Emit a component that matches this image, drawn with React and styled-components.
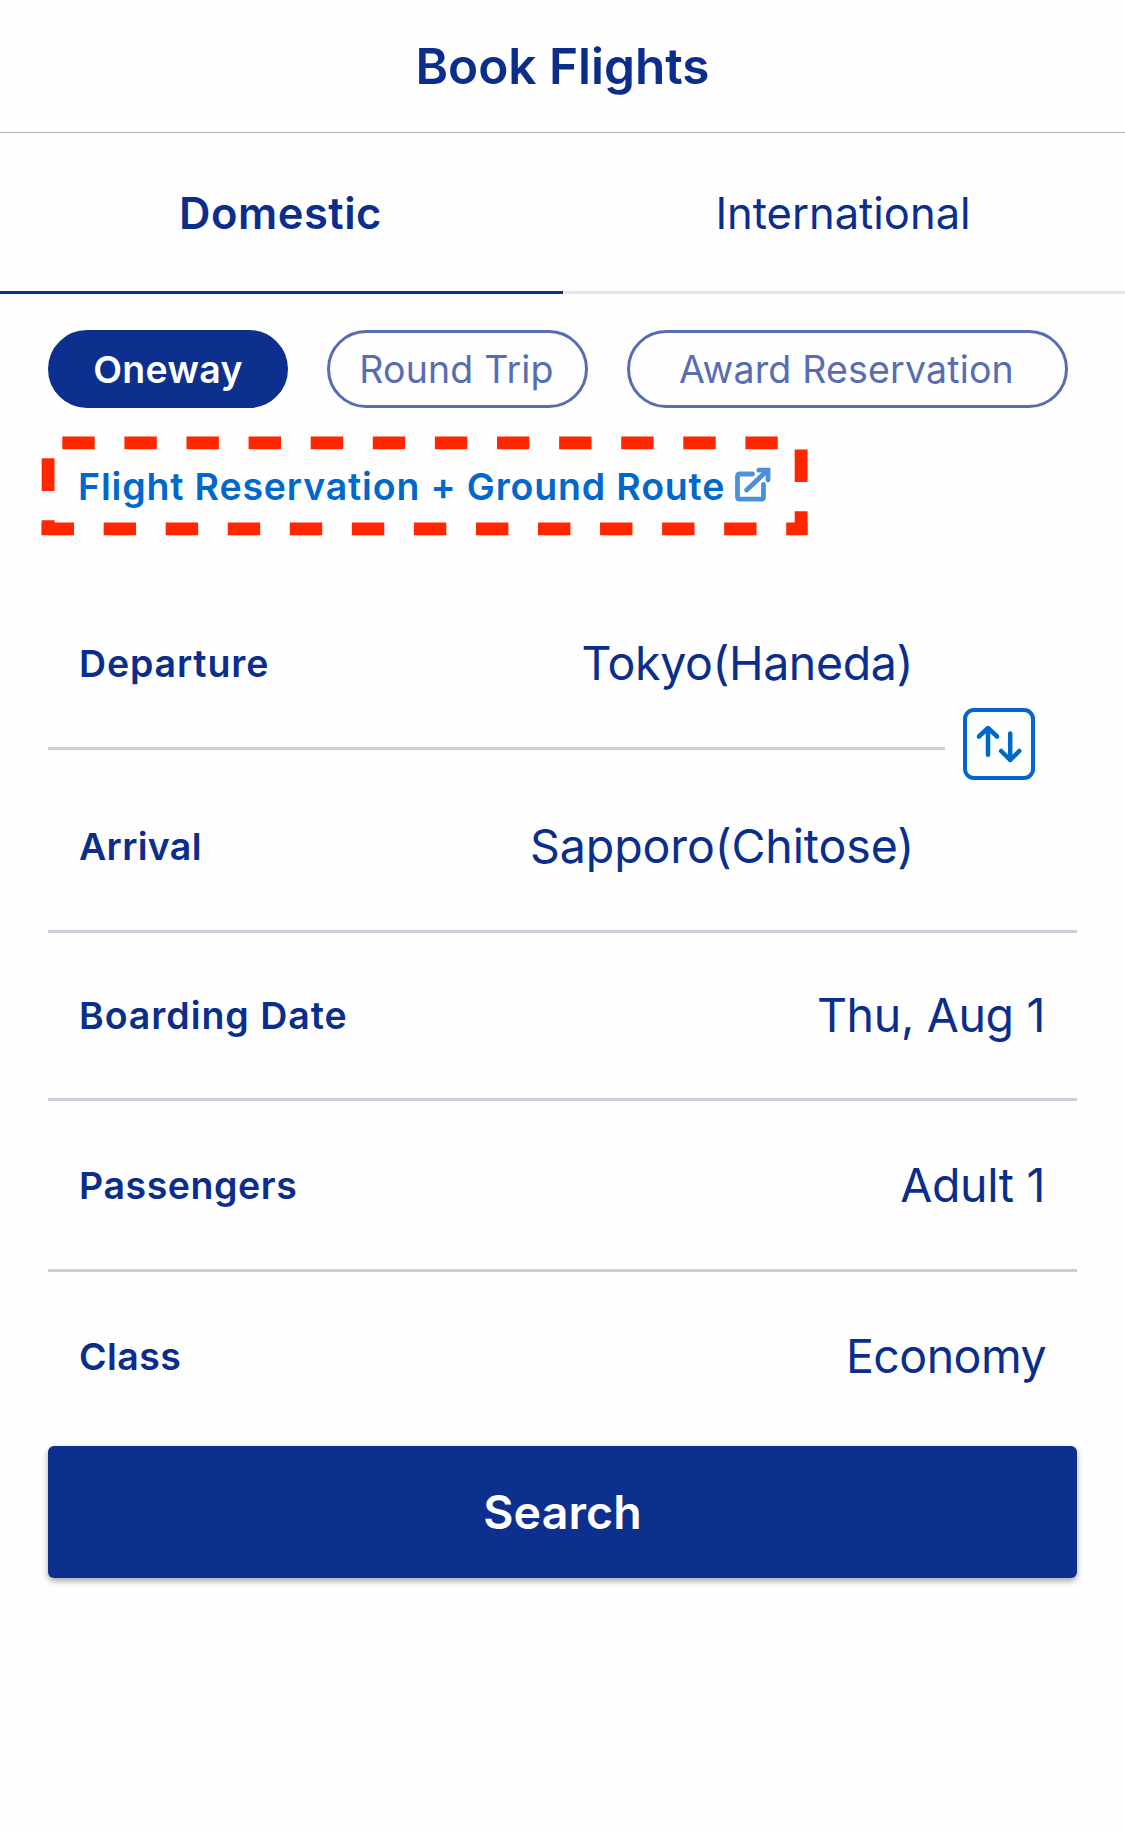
import React from 'react'
import styled, { createGlobalStyle } from 'styled-components'

const App = () => {
    return (
        <>
            <GlobalStyle />
            <Page>
                <Header>
                    <Title>Book Flights</Title>
                </Header>
                <Tabs>
                    <Tab $active $spacing="0.5px">Domestic</Tab>
                    <Tab>International</Tab>
                </Tabs>
                <Content>
                    <TripTypes>
                        <TripType $active $width="240px">Oneway</TripType>
                        <TripType $width="261px">Round Trip</TripType>
                        <TripType $width="441px">Award Reservation</TripType>
                    </TripTypes>
                    <Highlight>
                        <DashedFrame />
                        <RouteLink href="#">
                            Flight Reservation + Ground Route
                            <ExternalIcon />
                        </RouteLink>
                    </Highlight>
                    <Fields>
                        <Field $height="170px" $short>
                            <Label $spacing="0.85px">Departure</Label>
                            <Value $spacing="-0.4px">Tokyo(Haneda)</Value>
                        </Field>
                        <Field $height="183px" $top="13px" $right="163px">
                            <Label $spacing="0.3px">Arrival</Label>
                            <Value $spacing="-0.12px">Sapporo(Chitose)</Value>
                        </Field>
                        <Field $height="168px">
                            <Label $spacing="0.95px">Boarding Date</Label>
                            <Value>Thu, Aug 1</Value>
                        </Field>
                        <Field $height="171px" $top="1px">
                            <Label $spacing="0.55px">Passengers</Label>
                            <Value>Adult 1</Value>
                        </Field>
                        <Field $height="169px" $right="31px" $last>
                            <Label $spacing="0.4px">Class</Label>
                            <Value $spacing="-0.55px">Economy</Value>
                        </Field>
                        <SwapButton aria-label="Swap departure and arrival">
                            <SwapIcon />
                        </SwapButton>
                    </Fields>
                    <SearchButton>Search</SearchButton>
                </Content>
            </Page>
        </>
    )
}

export default App

const DashedFrame = () => (
    <FrameSvg width="767" height="100" viewBox="0 0 767 100" fill="none" stroke="#ff2600">
        <path d="M21.3 6.9H738" strokeWidth="12.8" strokeDasharray="32.4 29.7" />
        <path d="M0.6 92.9H766.5" strokeWidth="12.8" strokeDasharray="32.4 29.65" />
        <path d="M7.1 22.2V55M7.1 84.3V99" strokeWidth="12.8" />
        <path d="M760.1 13.5V46M760.1 75.3V99" strokeWidth="12.8" />
    </FrameSvg>
)

const ExternalIcon = () => (
    <IconSvg width="36" height="36" viewBox="0 0 36 36" fill="none" stroke="#4a90da" strokeWidth="4.8" strokeLinecap="round">
        <path d="M17.5 7H5Q2.5 7 2.5 9.5V29.7Q2.5 32.2 5 32.2H26Q28.5 32.2 28.5 29.7V17.5" strokeLinejoin="round" />
        <path d="M11.7 23L31.5 4.3" />
        <path d="M23.8 3.2H33V13" />
    </IconSvg>
)

const SwapIcon = () => (
    <svg width="48" height="40" viewBox="0 0 48 40" fill="none" stroke="#0067cb" strokeWidth="4.5" strokeLinecap="round" strokeLinejoin="round">
        <path d="M13 30.8V4.2M3.9 12.5L13 4L22.1 12.5" />
        <path d="M35.2 9.6V36M26.1 27L35.2 36L44.3 27" />
    </svg>
)

const GlobalStyle = createGlobalStyle`
    * {
        box-sizing: border-box;
    }

    body {
        margin: 0;
        background: #fefefe;
        font-family: Inter, "Liberation Sans", sans-serif;
        color: #0b2e8c;
    }

    button {
        padding: 0;
        font-family: inherit;
    }
`

const Page = styled.div`
    width: 1125px;
    min-height: 1832px;
`

const Header = styled.header`
    display: flex;
    align-items: center;
    justify-content: center;
    height: 133px;
    border-bottom: 1px solid #aeb1b3;
`

const Title = styled.h1`
    margin: 0;
    font-size: 49.5px;
    font-weight: 600;
    line-height: 60px;
`

const Tabs = styled.nav`
    display: grid;
    grid-template-columns: 563px 1fr;
    height: 161px;
`

const Tab = styled.button`
    padding: 2px 2px 0 0;
    border: 0;
    border-bottom: 3px solid ${({ $active }) => ($active ? '#0d308e' : '#e3e5f0')};
    background: transparent;
    color: #0b2e8c;
    font-size: 43.5px;
    font-weight: ${({ $active }) => ($active ? 600 : 400)};
    letter-spacing: ${({ $spacing }) => $spacing || 0};
`

const Content = styled.main`
    padding: 36px 48px 0;
`

const TripTypes = styled.div`
    display: flex;
    gap: 39px;
`

const TripType = styled.button`
    flex: none;
    width: ${({ $width }) => $width};
    height: 78px;
    padding-right: ${({ $active }) => ($active ? 0 : '2px')};
    border: 3px solid ${({ $active }) => ($active ? '#0d308e' : '#576db0')};
    border-radius: 39px;
    background: ${({ $active }) => ($active ? '#0d308e' : 'transparent')};
    color: ${({ $active }) => ($active ? '#fff' : '#576db0')};
    font-size: 37.5px;
    font-weight: ${({ $active }) => ($active ? 600 : 400)};
    letter-spacing: ${({ $active }) => ($active ? '0.3px' : '0.18px')};
    white-space: nowrap;
`

const Highlight = styled.div`
    position: relative;
    display: flex;
    align-items: center;
    width: 767px;
    height: 100px;
    margin: 28px 0 0 -7px;
    padding: 1px 0 0 37px;
`

const FrameSvg = styled.svg`
    position: absolute;
    inset: 0;
`

const RouteLink = styled.a`
    display: flex;
    align-items: center;
    gap: 10px;
    color: #0067cb;
    font-size: 37.5px;
    font-weight: 600;
    line-height: 46px;
    letter-spacing: 0.83px;
    text-decoration: none;
    white-space: nowrap;
`

const IconSvg = styled.svg`
    flex: none;
    margin-bottom: 4px;
`

const Fields = styled.div`
    position: relative;
    margin-top: 44px;
`

const Field = styled.div`
    display: flex;
    align-items: center;
    justify-content: space-between;
    width: ${({ $short }) => ($short ? '897px' : '100%')};
    height: ${({ $height }) => $height};
    padding: ${({ $top, $right }) => `${$top || 0} ${$right || '32px'} 0 31px`};
    border-bottom: ${({ $last }) => ($last ? 0 : '3px solid #cacedb')};
`

const Label = styled.span`
    font-size: 37.5px;
    font-weight: 600;
    line-height: 46px;
    letter-spacing: ${({ $spacing }) => $spacing || 0};
`

const Value = styled.span`
    margin-bottom: 2px;
    font-size: 46.5px;
    line-height: 56px;
    letter-spacing: ${({ $spacing }) => $spacing || '-0.35px'};
`

/* sits over the line between departure and arrival */
const SwapButton = styled.button`
    position: absolute;
    top: 128px;
    right: 42px;
    display: flex;
    align-items: center;
    justify-content: center;
    width: 72px;
    height: 72px;
    border: 4px solid #0067cb;
    border-radius: 11px;
    background: #fefefe;
`

const SearchButton = styled.button`
    display: block;
    width: 100%;
    height: 132px;
    margin-top: 5px;
    border: 0;
    border-radius: 6px;
    background: #0d308e;
    box-shadow: 0 3px 6px rgba(0, 0, 0, 0.35);
    color: #fff;
    font-size: 46.5px;
    font-weight: 600;
    letter-spacing: 0.1px;
`
